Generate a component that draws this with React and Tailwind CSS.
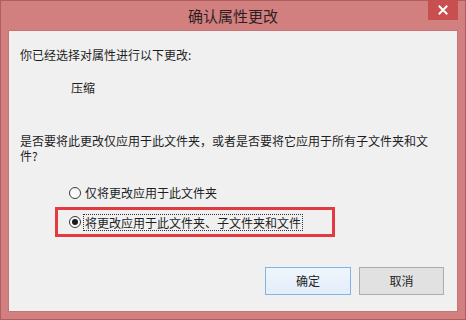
import React from "react";

function Radio({ checked }) {
  return (
    <span className="relative inline-flex h-[12px] w-[12px] shrink-0 items-center justify-center rounded-full border border-[#3c3c3c] bg-gradient-to-b from-[#f4f4f4] to-white">
      {checked && <span className="h-[6px] w-[6px] rounded-full bg-[#1a1a1a]" />}
    </span>
  );
}

export default function App() {
  const font = { fontFamily: '"Noto Sans CJK SC", "Noto Sans", sans-serif' };
  return (
    <div
      className="flex h-[320px] w-[466px] flex-col border border-[#b35e5e] bg-[#d27f7f] text-[12px] text-[#1e1e1e]"
      style={font}
    >
      <div className="relative flex h-[29px] shrink-0 items-center justify-center">
        <span className="text-[15px] leading-[20px] text-[#2e1f1f]">确认属性更改</span>
        <div className="absolute right-[7px] top-[-1px] flex h-[20px] w-[30px] items-center justify-center bg-[#c84f4f]">
          <svg width="10" height="10" viewBox="0 0 10 10">
            <path d="M1.5 1.5 L8.5 8.5 M8.5 1.5 L1.5 8.5" stroke="white" strokeWidth="2" strokeLinecap="square" />
          </svg>
        </div>
      </div>
      <div className="mx-[7px] mb-[7px] flex flex-1 flex-col border border-[#c97474] bg-[#f0f0f0] pb-[16px] pl-[11px] pr-[13px] pt-[16px]">
        <div className="leading-[15px]">你已经选择对属性进行以下更改:</div>
        <div className="mt-[18px] pl-[51px] leading-[15px]">压缩</div>
        <div className="mt-[38px] w-[414px] leading-[15px]">
          是否要将此更改仅应用于此文件夹，或者是否要将它应用于所有子文件夹和文件?
        </div>
        <div className="mt-[22px] ml-[49px] flex items-center gap-[4px] leading-[15px]">
          <Radio />
          <span>仅将更改应用于此文件夹</span>
        </div>
        <div className="mt-[7px] ml-[35px] flex h-[30px] w-[280px] items-center border-[3px] border-[#e23a40] pl-[11px]">
          <Radio checked />
          <span className="ml-[2px] border border-dotted border-[#333] px-[1px] leading-[15px]">
            将更改应用于此文件夹、子文件夹和文件
          </span>
        </div>
        <div className="mt-auto flex justify-end gap-[8px]">
          <button className="h-[28px] w-[86px] border border-[#7fb5e8] bg-gradient-to-b from-[#eef5fc] to-[#e3eefa] text-[12px] text-[#1e1e1e]">
            确定
          </button>
          <button className="h-[28px] w-[85px] border border-[#adadad] bg-[#e1e1e1] text-[12px] text-[#1e1e1e]">
            取消
          </button>
        </div>
      </div>
    </div>
  );
}
